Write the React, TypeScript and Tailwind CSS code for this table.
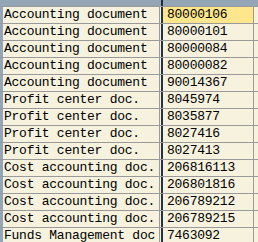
import React from 'react';

const rows: [string, string][] = [
  ['Accounting document', '80000106'],
  ['Accounting document', '80000101'],
  ['Accounting document', '80000084'],
  ['Accounting document', '80000082'],
  ['Accounting document', '90014367'],
  ['Profit center doc.', '8045974'],
  ['Profit center doc.', '8035877'],
  ['Profit center doc.', '8027416'],
  ['Profit center doc.', '8027413'],
  ['Cost accounting doc.', '206816113'],
  ['Cost accounting doc.', '206801816'],
  ['Cost accounting doc.', '206789212'],
  ['Cost accounting doc.', '206789215'],
  ['Funds Management doc', '7463092'],
];

const App: React.FC = () => {
  return (
    <div className="w-[258px] h-[242px] overflow-hidden bg-[#f6f2de] font-['Liberation_Mono',monospace] text-[13px] tracking-[-0.25px] text-black">
      <div className="flex h-[7px] border-b border-[#9a9a9a]">
        <div className="w-[159px] bg-[#94a6b6]"></div>
        <div className="w-[4px] bg-[#94a6b6] border-r-2 border-[#1f2c3a]"></div>
        <div className="w-[91px] bg-[#94a6b6]"></div>
        <div className="flex-1 bg-[#94a6b6]"></div>
      </div>
      {rows.map(([type, num], i) => (
        <div key={i} className="flex h-[17px] border-b border-[#9a9a9a]">
          <div className="w-[3px] bg-[#94a6b6]"></div>
          <div className="w-[156px] pl-[1px] leading-[16px] whitespace-nowrap overflow-hidden">{type}</div>
          <div className="w-[4px] border-l border-[#9a9a9a] border-r-2 border-r-[#22334a]"></div>
          <div
            className={
              i === 0
                ? 'w-[91px] pl-[4px] leading-[16px] bg-[#fde68c] border-r border-[#9a9a9a]'
                : 'w-[91px] pl-[4px] leading-[16px] border-r border-[#9a9a9a]'
            }
          >
            {num}
          </div>
          <div className="flex-1"></div>
        </div>
      ))}
    </div>
  );
};

export default App;
